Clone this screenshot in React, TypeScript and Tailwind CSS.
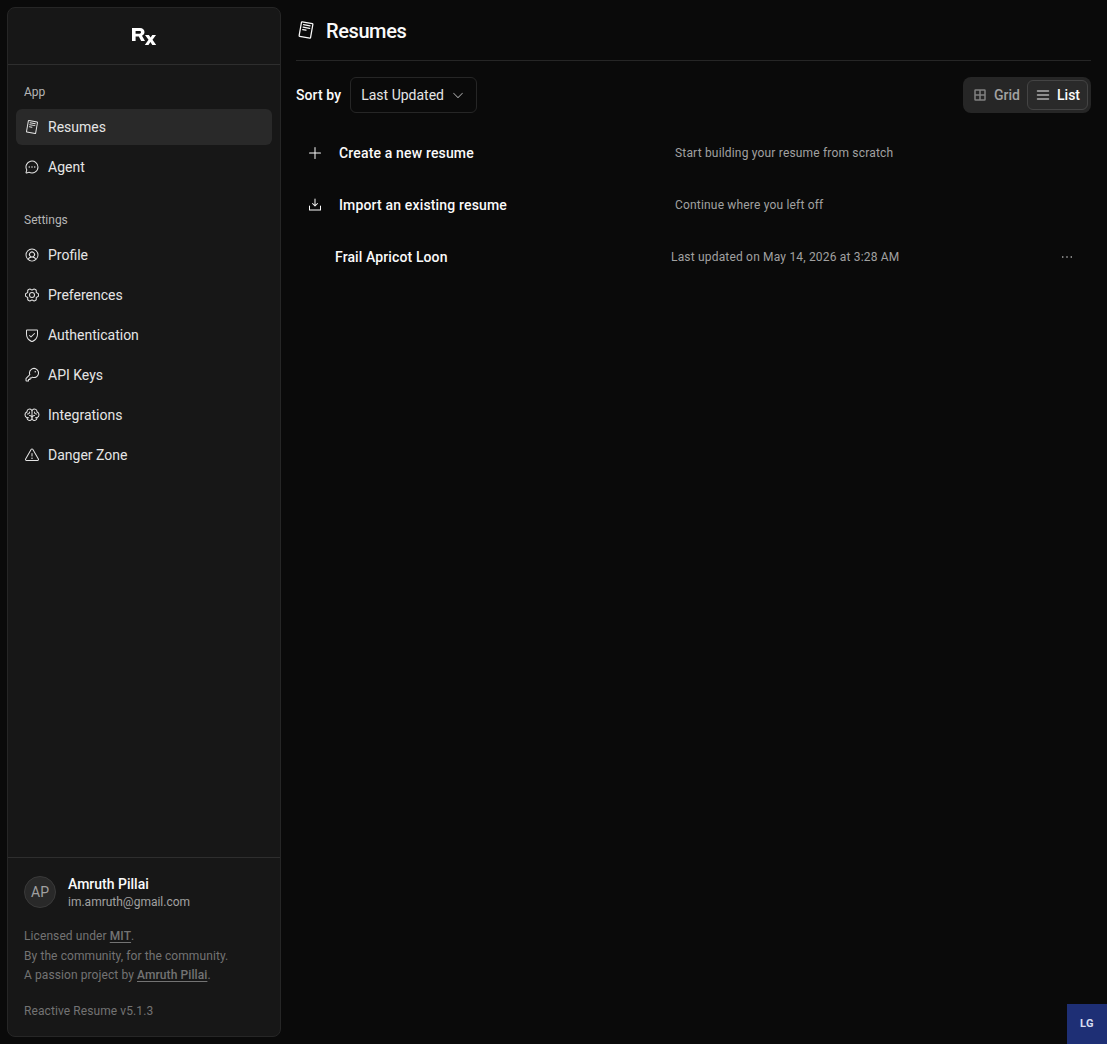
import {
  PiReadCvLogo, PiChatCircleDots, PiUserCircle, PiGearSix, PiShieldCheck, PiKey, PiBrain, PiWarning,
  PiPlus, PiDownloadSimple, PiGridFourBold, PiListBold, PiCaretDown, PiDotsThree,
} from "react-icons/pi";

function Logo() {
  return (
    <svg width="25" height="17" viewBox="0 0 25 17" className="block">
      <path fill="#fff" fillRule="evenodd" d="M0 0h8c2.800 0 4.500 1.700 4.500 4.100 0 1.800-1 3.100-2.500 3.700L13 13H9.200L6.800 8.500H3.600V13H0V0Zm3.600 3v2.700h3.900c1 0 1.500-.5 1.500-1.350S8.500 3 7.500 3H3.600Z" />
      <path fill="#fff" d="M13 7h3.900l1.700 2.600L20.300 7H24l-3.500 4.800L24.200 17h-3.900l-1.900-2.900-1.900 2.900H12.800l3.700-5.200L13 7Z" />
    </svg>
  );
}

function NavItem({ icon: Icon, label, active }: { icon: any; label: string; active?: boolean }) {
  return (
    <a className={`flex h-9 items-center gap-2 rounded-md px-2 text-sm text-[#e5e5e5] ${active ? "bg-[#292929]" : ""}`}>
      <Icon className="size-4 shrink-0" />
      <span>{label}</span>
    </a>
  );
}

function Row({ icon: Icon, title, sub }: { icon?: any; title: string; sub: string }) {
  return (
    <div className="flex h-11 items-center text-sm">
      <div className="flex w-[43px] shrink-0 pl-[11px]">{Icon ? <Icon className="size-4 text-[#fafafa]" /> : null}</div>
      <div className="w-[336px] font-medium tracking-[0.16px] text-[#fafafa]">{title}</div>
      <div className="text-xs tracking-[0.18px] text-[#a1a1a1]">{sub}</div>
    </div>
  );
}

export default function App() {
  return (
    <div className="flex h-[1044px] overflow-hidden bg-[#0a0a0a] p-[7px] font-['Roboto',sans-serif] text-[#fafafa]">
      <aside className="flex w-[274px] shrink-0 flex-col rounded-lg border border-[#262626] bg-[#171717]">
        <div className="flex h-[57px] items-start justify-center border-b border-[#2e2e2e] pt-5">
          <Logo />
        </div>
        <div className="flex flex-1 flex-col px-2 pt-[10px]">
          <div className="mb-0.5 flex h-8 items-center px-2 pt-0.5 text-xs text-[#b5b5b5]">App</div>
          <nav className="flex flex-col gap-1">
            <NavItem icon={PiReadCvLogo} label="Resumes" active />
            <NavItem icon={PiChatCircleDots} label="Agent" />
          </nav>
          <div className="mt-[18px] mb-0.5 flex h-8 items-center px-2 pt-0.5 text-xs text-[#b5b5b5]">Settings</div>
          <nav className="flex flex-col gap-1">
            <NavItem icon={PiUserCircle} label="Profile" />
            <NavItem icon={PiGearSix} label="Preferences" />
            <NavItem icon={PiShieldCheck} label="Authentication" />
            <NavItem icon={PiKey} label="API Keys" />
            <NavItem icon={PiBrain} label="Integrations" />
            <NavItem icon={PiWarning} label="Danger Zone" />
          </nav>
        </div>
        <div className="border-t border-[#2e2e2e] px-4 pt-4 pb-[15px]">
          <div className="flex items-center gap-3">
            <div className="flex size-8 items-center justify-center rounded-full border border-[#3a3a3a] bg-[#292929] text-sm text-[#a1a1a1]">AP</div>
            <div>
              <div className="text-sm leading-5 font-medium text-[#fafafa]">Amruth Pillai</div>
              <div className="text-xs leading-4 text-[#a1a1a1]">im.amruth@gmail.com</div>
            </div>
          </div>
          <div className="mt-[17px] text-xs leading-[19.5px] tracking-[0.09px] text-[#737373]">
            <p>Licensed under <span className="font-medium underline underline-offset-2">MIT</span>.</p>
            <p>By the community, for the community.</p>
            <p>A passion project by <span className="font-medium underline underline-offset-2">Amruth Pillai</span>.</p>
          </div>
          <div className="mt-4 text-xs leading-[19.5px] tracking-[0.09px] text-[#737373]">Reactive Resume v5.1.3</div>
        </div>
      </aside>
      <main className="ml-[15px] flex min-w-0 flex-1 flex-col pr-[9px]">
        <header className="-mt-[7px] flex h-[61px] shrink-0 items-center gap-[10px] border-b border-[#262626] pt-0.5">
          <PiReadCvLogo className="size-5 -translate-y-px text-[#fafafa]" />
          <h1 className="text-xl font-medium tracking-[-0.4px]">Resumes</h1>
        </header>
        <div className="mt-4 flex items-center justify-between">
          <div className="flex items-center gap-[9px]">
            <span className="text-sm font-medium tracking-[0.1px]">Sort by</span>
            <div className="flex h-9 w-[127px] items-center justify-between rounded-md border border-[#262626] pr-[11px] pl-[10px] text-sm text-[#e5e5e5]">
              Last Updated
              <PiCaretDown className="size-[14px] text-[#a1a1a1]" />
            </div>
          </div>
          <div className="flex h-9 w-32 items-center justify-between rounded-lg bg-[#262626] p-[3px] pl-[9px] text-sm font-medium">
            <div className="flex h-full items-center gap-[6px] text-[#a1a1a1]">
              <PiGridFourBold className="size-4 text-[#808080]" />
              Grid
            </div>
            <div className="flex h-full w-[61px] items-center gap-[6px] rounded-md border border-[#444] bg-[#2a2a2a] pl-[7px] text-[#fafafa]">
              <PiListBold className="size-4 text-[#b0b0b0]" />
              List
            </div>
          </div>
        </div>
        <div className="mt-[18px] flex flex-col gap-2">
          <Row icon={PiPlus} title="Create a new resume" sub="Start building your resume from scratch" />
          <Row icon={PiDownloadSimple} title="Import an existing resume" sub="Continue where you left off" />
          <div className="flex h-11 items-center pr-4 text-sm">
            <div className="w-[39px] shrink-0" />
            <div className="w-[336px] font-medium tracking-[0.11px] text-[#fafafa]">Frail Apricot Loon</div>
            <div className="flex-1 text-xs tracking-[0.18px] text-[#a1a1a1]">Last updated on May 14, 2026 at 3:28 AM</div>
            <PiDotsThree className="size-4 text-[#d4d4d4]" />
          </div>
        </div>
      </main>
      <div className="fixed right-0 bottom-0 flex h-10 w-10 items-center justify-center bg-[#1e2f75] text-[11px] font-bold tracking-wider text-[#d8dcf0]">LG</div>
    </div>
  );
}
